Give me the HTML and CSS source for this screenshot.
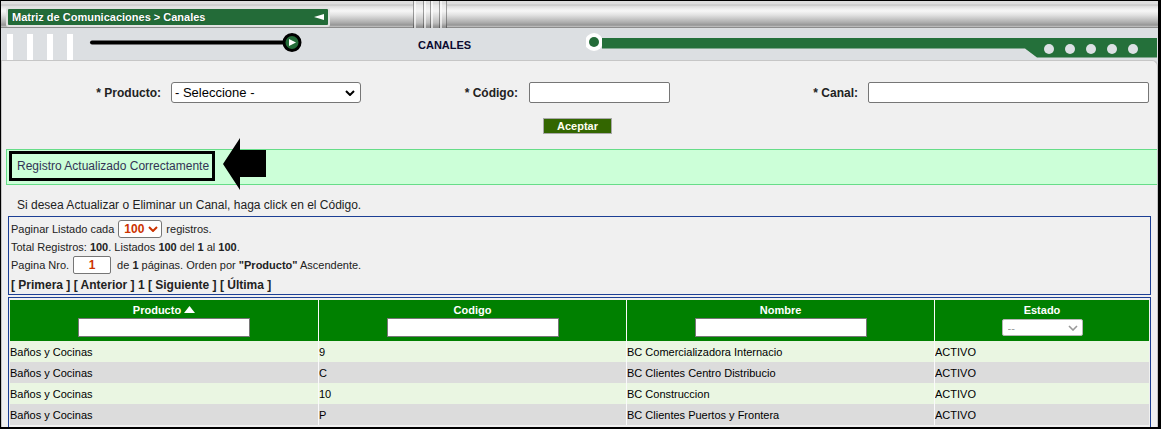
FILE: index.html
```html
<!DOCTYPE html>
<html lang="es">
<head>
<meta charset="utf-8">
<title>Canales</title>
<link rel="stylesheet" href="styles.css">
</head>
<body>
<div class="frame">
  <header class="top">
    <div class="bar">
      <div class="crumb"><span>Matriz de Comunicaciones &gt; Canales</span><i class="tri"></i></div>
      <div class="grooves"></div>
    </div>
    <div class="deck">
      <div class="bars"><i></i><i></i><i></i><i></i></div>
      <svg class="slider" width="220" height="32" viewBox="0 0 220 32">
        <line x1="6" y1="14.5" x2="200" y2="14.5" stroke="#000" stroke-width="4" stroke-linecap="round"/>
        <circle cx="206" cy="14.5" r="8" fill="#236b38" stroke="#000" stroke-width="3"/>
        <path d="M203 11 L210 14.5 L203 18 Z" fill="#fff"/>
      </svg>
      <div class="title">CANALES</div>
      <svg class="band" width="571" height="32" viewBox="0 0 571 32">
        <circle cx="8" cy="14" r="9" fill="#fff"/>
        <circle cx="8" cy="14" r="5" fill="#236b38"/>
        <path d="M16 10 H571 V29.5 H451 L439 20.5 H16 Z" fill="#24703a"/>
        <g fill="#dde1e5">
          <circle cx="463" cy="21" r="5"/>
          <circle cx="484" cy="21" r="5"/>
          <circle cx="505" cy="21" r="5"/>
          <circle cx="526" cy="21" r="5"/>
          <circle cx="547" cy="21" r="5"/>
        </g>
      </svg>
    </div>
  </header>

  <main class="panel">
    <form class="filters">
      <label class="lbl lbl-1">* Producto:</label>
      <span class="sel sel-prod"><select><option>- Seleccione -</option></select><svg class="chev" width="10" height="6" viewBox="0 0 10 6"><path d="M1 1l4 4 4-4" fill="none" stroke="currentColor" stroke-width="2"/></svg></span>
      <label class="lbl lbl-2">* Código:</label>
      <input class="txt txt-cod" type="text">
      <label class="lbl lbl-3">* Canal:</label>
      <input class="txt txt-can" type="text">
    </form>
    <div class="actions"><button class="btn" type="button">Aceptar</button></div>

    <div class="msg">
      <div class="note">Registro Actualizado Correctamente</div>
      <svg class="arrow" width="43" height="53" viewBox="0 0 43 53"><path d="M0 26 L17 0 V12 H43 V39 H17 V52 Z" fill="#000"/></svg>
    </div>

    <p class="desc">Si desea Actualizar o Eliminar un Canal, haga click en el Código.</p>

    <div class="pager">
      <div class="prow r1"><span>Paginar Listado cada</span><span class="sel sel-num"><select><option>100</option></select><svg class="chev" width="10" height="6" viewBox="0 0 10 6"><path d="M1 1l4 4 4-4" fill="none" stroke="currentColor" stroke-width="2"/></svg></span><span>registros.</span></div>
      <div class="prow r2"><span>Total Registros: <b>100</b>. Listados <b>100</b> del <b>1</b> al <b>100</b>.</span></div>
      <div class="prow r3"><span>Pagina Nro.</span><input class="pnum" type="text" value="1"><span>de <b>1</b> páginas. Orden por <b>"Producto"</b> Ascendente.</span></div>
      <div class="prow r4"><span>[ Primera ] [ Anterior ] 1 [ Siguiente ] [ Última ]</span></div>
    </div>

    <div class="grid">
      <table>
        <thead>
          <tr>
            <th class="c1"><div class="hl">Producto <svg class="sort" width="11" height="7" viewBox="0 0 11 7"><path d="M0 7 L5.5 0 L11 7 Z" fill="#fff"/></svg></div><input class="hin" type="text"></th>
            <th class="c2"><div class="hl">Codigo</div><input class="hin" type="text"></th>
            <th class="c3"><div class="hl">Nombre</div><input class="hin" type="text"></th>
            <th class="c4"><div class="hl">Estado</div><span class="sel sel-est"><select><option>--</option></select><svg class="chev" width="10" height="6" viewBox="0 0 10 6"><path d="M1 1l4 4 4-4" fill="none" stroke="currentColor" stroke-width="1.6"/></svg></span></th>
          </tr>
        </thead>
        <tbody>
          <tr><td>Baños y Cocinas</td><td>9</td><td>BC Comercializadora Internacio</td><td>ACTIVO</td></tr>
          <tr><td>Baños y Cocinas</td><td>C</td><td>BC Clientes Centro Distribucio</td><td>ACTIVO</td></tr>
          <tr><td>Baños y Cocinas</td><td>10</td><td>BC Construccion</td><td>ACTIVO</td></tr>
          <tr><td>Baños y Cocinas</td><td>P</td><td>BC Clientes Puertos y Frontera</td><td>ACTIVO</td></tr>
        </tbody>
      </table>
    </div>
  </main>
</div>
</body>
</html>
```

FILE: styles.css
```css
* { box-sizing: border-box; }
html, body { margin: 0; padding: 0; }
body { font-family: "Liberation Sans", Arial, sans-serif; background: #fff; }

.frame {
  width: 1161px;
  height: 429px;
  border: 1px solid #000;
  border-right-width: 3px;
  border-bottom-width: 2px;
  overflow: hidden;
  background: #dcdfe2;
}

/* ---------- header ---------- */
.bar {
  height: 27px;
  display: flex;
  align-items: flex-start;
  background: linear-gradient(to bottom,
    #dedede 0, #dedede 3px, #c2c2c2 4px, #dcdcdc 5px, #efefef 8px,
    #f6f6f6 10px, #e2e2e2 14px, #c6c6c6 18px, #a9a9a9 22px,
    #959595 24px, #aaaaaa 25px, #c9c9c9 26px, #8c8c8c 26px);
}
.crumb {
  margin: 8px 0 0 7px;
  width: 320px;
  height: 16px;
  background: #236b38;
  box-shadow: 0 0 0 2px #e2e2e2;
  border-radius: 1px;
  display: flex;
  align-items: center;
  justify-content: space-between;
  padding: 0 4px 0 4px;
  color: #fff;
  font-weight: bold;
  font-size: 11px;
  text-shadow: 0 0 1px #0b3a18;
}
.tri {
  width: 0;
  height: 0;
  border-top: 3.5px solid transparent;
  border-bottom: 3.5px solid transparent;
  border-right: 10px solid #fff;
}
.grooves {
  margin-left: 85px;
  width: 34px;
  height: 27px;
  background:
    linear-gradient(to right,
      rgba(0,0,0,.35) 0 1px, rgba(255,255,255,.6) 1px 3px, transparent 3px 10px,
      rgba(0,0,0,.35) 10px 11px, rgba(255,255,255,.6) 11px 13px, transparent 13px 17px,
      rgba(0,0,0,.35) 17px 18px, rgba(255,255,255,.6) 18px 20px, transparent 20px 26px,
      rgba(0,0,0,.35) 26px 27px, rgba(255,255,255,.6) 27px 29px, transparent 29px 33px,
      rgba(0,0,0,.35) 33px 34px),
    linear-gradient(to bottom, #dedede 0 3px, #e8e8e8 4px, #f4f4f4 10px, #bcbcbc 22px, #9a9a9a 25px, #8c8c8c 27px);
}

.deck {
  height: 32px;
  display: flex;
  align-items: flex-start;
  background: #dcdfe2;
}
.bars {
  display: flex;
  gap: 14px;
  margin: 6px 0 0 6px;
}
.bars i {
  display: block;
  width: 6px;
  height: 26px;
  background: #fff;
}
.slider { display: block; margin-left: 13px; }
.title {
  width: 168px;
  margin: 11px 0 0 112px;
  line-height: 13px;
  font-size: 11px;
  font-weight: bold;
  color: #0a0a30;
}
.band { display: block; }

/* ---------- panel ---------- */
.panel {
  background: #f0f0f0;
  border: 1px solid #c6c6c6;
  border-bottom: 0;
  border-radius: 0 6px 0 0;
  height: 400px;
}

.filters {
  margin: 21px 0 0 0;
  height: 21px;
  display: flex;
  align-items: center;
}
.lbl {
  font-size: 12px;
  font-weight: bold;
  color: #222;
  text-align: right;
}
.lbl-1 { width: 159px; margin-right: 10px; }
.lbl-2 { width: 157px; margin-right: 11px; }
.lbl-3 { width: 188px; margin-right: 10px; }

.txt {
  height: 21px;
  margin: 0;
  padding: 0 3px;
  border: 1px solid #767676;
  border-radius: 2px;
  background: #fff;
}
.txt-cod { width: 141px; }
.txt-can { width: 281px; }

.sel { position: relative; display: inline-flex; vertical-align: middle; }
.sel select {
  -webkit-appearance: none;
  appearance: none;
  margin: 0;
  font-family: inherit;
  background: #fff;
}
.chev {
  position: absolute;
  top: 50%;
  margin-top: -3px;
  pointer-events: none;
}
.sel-prod select {
  width: 190px;
  height: 21px;
  border: 1px solid #767676;
  border-radius: 3px;
  padding: 0 0 0 3px;
  font-size: 13px;
  color: #000;
}
.sel-prod .chev { right: 6px; color: #000; }

.actions { margin-top: 15px; height: 16px; }
.btn {
  display: block;
  margin: 0 0 0 541px;
  width: 69px;
  height: 16px;
  padding: 0;
  background: #336600;
  border: 1px solid #a8a8a8;
  color: #fffff0;
  font-family: inherit;
  font-size: 11px;
  font-weight: bold;
  line-height: 14px;
}

.msg {
  position: relative;
  margin: 15px 0 0 4px;
  height: 36px;
  background: #ccffd8;
  border: 1px solid #66dd88;
  border-right: 0;
}
.note {
  display: inline-block;
  margin: 1px 0 0 2px;
  height: 30px;
  padding: 0 3px 0 5px;
  border: 3px solid #000;
  font-size: 12px;
  line-height: 24px;
  color: #333355;
}
.arrow {
  position: absolute;
  left: 216px;
  top: -12px;
}

.desc {
  margin: 13px 0 0 0;
  padding-left: 15px;
  font-size: 12px;
  line-height: 15px;
  color: #222;
}

.pager {
  margin: 3px 0 0 6px;
  width: 1143px;
  border: 1px solid #1c3f94;
  padding: 0 0 0 2px;
  font-size: 11px;
  color: #222;
}
.prow { display: flex; align-items: center; white-space: nowrap; }
.r1 { margin-top: 2px; height: 19px; }
.r2 { height: 17px; }
.r3 { height: 20px; }
.r4 { height: 19px; font-size: 12px; font-weight: bold; }
.sel-num { margin: 0 4px; }
.sel-num select {
  width: 44px;
  height: 18px;
  border: 1px solid #767676;
  border-radius: 3px;
  padding: 0 0 0 5px;
  font-size: 12px;
  font-weight: bold;
  color: #cc3300;
}
.sel-num .chev { right: 4px; color: #cc3300; }
.pnum {
  width: 38px;
  height: 18px;
  margin: 0 6px 0 4px;
  padding: 0;
  border: 1px solid #767676;
  border-radius: 2px;
  background: #fff;
  text-align: center;
  font-family: inherit;
  font-size: 12px;
  font-weight: bold;
  color: #cc3300;
}

.grid {
  margin: 2px 0 0 6px;
  width: 1143px;
  height: 200px;
  border: 1px solid #1c3f94;
  padding: 2px 0 0 1px;
}
table {
  width: 1139px;
  border-collapse: separate;
  border-spacing: 0;
  table-layout: fixed;
  font-size: 11px;
}
th.c1 { width: 308px; }
th.c2 { width: 308px; }
th.c3 { width: 308px; }
th.c4 { width: 215px; }
th + th, td + td { border-left: 1px solid #fafafa; }
th {
  height: 41px;
  padding: 4px 0 4px;
  vertical-align: top;
  background: #008000;
  color: #fff;
  font-weight: bold;
  text-align: center;
}
.hl { height: 13px; line-height: 13px; }
.sort { vertical-align: 1px; }
.hin {
  display: block;
  margin: 1px auto 0;
  width: 172px;
  height: 19px;
  padding: 0;
  border: 1px solid #767676;
  background: #fff;
}
.sel-est { margin-top: 2px; }
.sel-est select {
  width: 81px;
  height: 17px;
  border: 1px solid #b5b5b5;
  border-radius: 2px;
  padding: 0 0 0 5px;
  font-size: 11px;
  color: #999;
}
.sel-est .chev { right: 5px; color: #999; }
td {
  height: 21px;
  padding: 0;
  color: #000;
  white-space: nowrap;
  overflow: hidden;
}
tbody tr:nth-child(odd) td { background: #eaf6e2; }
tbody tr:nth-child(even) td { background: #dcdcdc; }
```
